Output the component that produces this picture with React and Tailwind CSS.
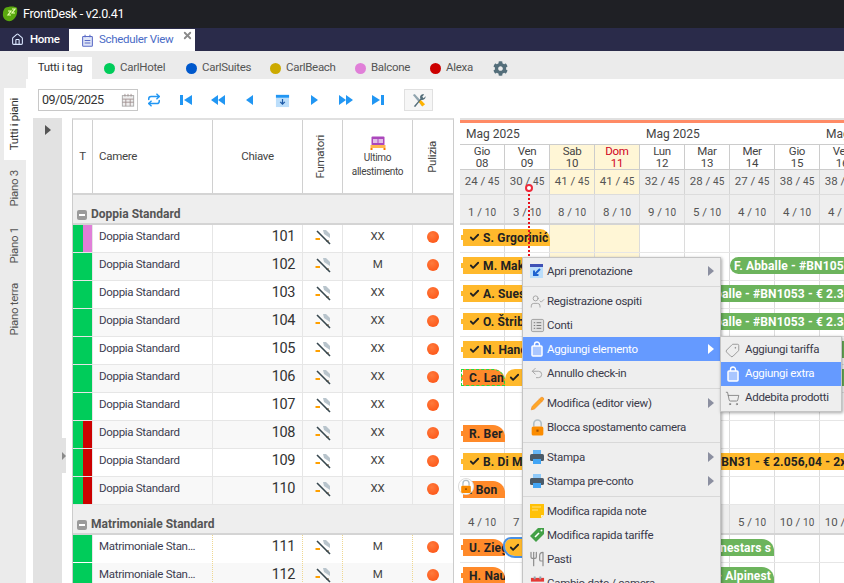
import React from "react";
import { Home, Repeat, Undo2, Pencil, Tag, ShoppingCart, Check, X, UserCheck, Utensils } from "lucide-react";
import { FaCog } from "react-icons/fa";

const tags = [
  { name: "CarlHotel", dot: "bg-[#00cc5a]", w: "w-[82px]" },
  { name: "CarlSuites", dot: "bg-[#0058cc]", w: "w-[84px]" },
  { name: "CarlBeach", dot: "bg-[#ccaa00]", w: "w-[85px]" },
  { name: "Balcone", dot: "bg-[#e07fd8]", w: "w-[75px]" },
  { name: "Alexa", dot: "bg-[#cc0000]", w: "w-[63px]" },
];

const days = [
  { d: "Gio", n: "08", a: "24", b: "1" },
  { d: "Ven", n: "09", a: "30", b: "3" },
  { d: "Sab", n: "10", a: "41", b: "8", we: true },
  { d: "Dom", n: "11", a: "41", b: "8", we: true, red: true },
  { d: "Lun", n: "12", a: "32", b: "9" },
  { d: "Mar", n: "13", a: "28", b: "5" },
  { d: "Mer", n: "14", a: "27", b: "4" },
  { d: "Gio", n: "15", a: "38", b: "4" },
  { d: "Ven", n: "16", a: "38", b: "4" },
];

const doppie = [
  { n: "101", s: "XX", side: "bg-[#e07fd8]" },
  { n: "102", s: "M" },
  { n: "103", s: "XX" },
  { n: "104", s: "XX" },
  { n: "105", s: "XX" },
  { n: "106", s: "XX" },
  { n: "107", s: "XX" },
  { n: "108", s: "XX", side: "bg-[#cc0000]" },
  { n: "109", s: "XX", side: "bg-[#cc0000]" },
  { n: "110", s: "XX", side: "bg-[#cc0000]" },
];

const matrimoniali = [
  { n: "111", s: "M" },
  { n: "112", s: "M" },
];

function Step({ kind }) {
  const shapes = {
    first: <><rect x="2" y="3" width="3" height="10" /><polygon points="14,3 14,13 6,8" /></>,
    fastPrev: <><polygon points="8,3 8,13 1,8" /><polygon points="15,3 15,13 8,8" /></>,
    prev: <polygon points="11,3 11,13 4,8" />,
    next: <polygon points="5,3 5,13 12,8" />,
    fastNext: <><polygon points="1,3 1,13 8,8" /><polygon points="8,3 8,13 15,8" /></>,
    last: <><polygon points="2,3 2,13 10,8" /><rect x="11" y="3" width="3" height="10" /></>,
  };
  return <svg viewBox="0 0 16 16" className="w-[16px] h-[16px] fill-[#2196f3]">{shapes[kind]}</svg>;
}

function NoSmoke() {
  return (
    <svg viewBox="0 0 16 16" className="w-[16px] h-[16px]">
      <rect x="0.5" y="9" width="4.5" height="2" fill="#ffa000" />
      <path d="M8 1 L11 1 L15 5 L15 9 L12 7 L9 5 Z" fill="#b8c4cc" />
      <rect x="11" y="11" width="3" height="2" fill="#b9a58f" />
      <path d="M2 2 L15 15" stroke="#37474f" strokeWidth="1.6" />
    </svg>
  );
}

function Bag() {
  return (
    <svg viewBox="0 0 16 16" className="w-[16px] h-[16px]">
      <path d="M5.5 5 V3.5 a2.5 2.5 0 0 1 5 0 V5" fill="none" stroke="#fff" strokeWidth="1.4" />
      <rect x="3" y="5" width="10" height="10" rx="1" fill="#a9c6ff" stroke="#fff" strokeWidth="1.5" />
    </svg>
  );
}

function Printer({ light }) {
  return (
    <svg viewBox="0 0 16 16" className="w-[16px] h-[16px]">
      <rect x="4" y="1" width="8" height="5" fill={light ? "#90caf9" : "#64b5f6"} />
      <rect x="1" y="5" width="14" height="7" rx="1.5" fill="#4a5a68" />
      <rect x="4" y="10" width="8" height="5" fill="#42a5f5" />
    </svg>
  );
}

const lockIcon = (
  <svg viewBox="0 0 16 16" className="w-[17px] h-[17px]">
    <path d="M4.5 7 V4.5 a3.5 3.5 0 0 1 7 0 V7" fill="none" stroke="#b0bec5" strokeWidth="1.5" />
    <rect x="2.5" y="7" width="11" height="8.5" rx="1.5" fill="#fb8c00" />
    <rect x="7" y="10" width="2" height="2" fill="#a04f00" />
  </svg>
);

const menuIcons = {
  open: (
    <svg viewBox="0 0 16 16" className="w-[16px] h-[16px]">
      <rect x="1" y="1" width="13" height="14" fill="#bbdefb" />
      <rect x="1" y="1" width="13" height="3" fill="#3f51b5" />
      <path d="M11 6 L5 12 M5 7.5 V12 H9.5" stroke="#1e63d0" strokeWidth="2" fill="none" />
    </svg>
  ),
  guests: <UserCheck size={15} strokeWidth={1.4} className="text-[#9e9e9e]" />,
  bills: (
    <svg viewBox="0 0 16 16" className="w-[15px] h-[15px]">
      <rect x="1.5" y="1.5" width="13" height="13" rx="1.5" fill="#e0e0e0" stroke="#9e9e9e" />
      <path d="M4 5 H5.5 M7 5 H12 M4 8 H5.5 M7 8 H12 M4 11 H5.5 M7 11 H12" stroke="#757575" />
    </svg>
  ),
  bag: <Bag />,
  undo: <Undo2 size={14} strokeWidth={1.5} className="text-[#9e9e9e]" />,
  edit: <Pencil size={15} strokeWidth={1.2} className="text-[#ef8f2f] fill-[#ffa726]" />,
  lock: lockIcon,
  print: <Printer />,
  printLight: <Printer light />,
  note: (
    <svg viewBox="0 0 16 16" className="w-[16px] h-[16px]">
      <path d="M1 1 H15 V12 L12 15 H1 Z" fill="#ffc107" />
      <path d="M3 4 H12 M3 7 H9" stroke="#ffe082" />
      <path d="M15 12 L12 15 V12 Z" fill="#fff3c4" />
    </svg>
  ),
  price: (
    <svg viewBox="0 0 16 16" className="w-[16px] h-[16px]">
      <path d="M1 9 L9 1 H15 V7 L7 15 Z" fill="#43a047" />
      <path d="M6 10 L10 6" stroke="#fff" strokeWidth="1.6" />
      <circle cx="12.5" cy="3.5" r="1" fill="#fff" />
    </svg>
  ),
  meals: <Utensils size={16} strokeWidth={1.8} className="text-[#8d8d8d]" />,
  change: (
    <svg viewBox="0 0 16 16" className="w-[15px] h-[15px]">
      <rect x="1" y="2" width="14" height="13" rx="1" fill="#eceff1" />
      <rect x="1" y="2" width="14" height="4" fill="#e53935" />
      <rect x="4" y="0.5" width="2" height="3" fill="#90a4ae" />
      <rect x="10" y="0.5" width="2" height="3" fill="#90a4ae" />
    </svg>
  ),
};

const menu = [
  { label: "Apri prenotazione", icon: "open", sub: true },
  "sep",
  { label: "Registrazione ospiti", icon: "guests" },
  { label: "Conti", icon: "bills" },
  { label: "Aggiungi elemento", icon: "bag", sub: true, active: true },
  { label: "Annullo check-in", icon: "undo" },
  "sep",
  { label: "Modifica (editor view)", icon: "edit", sub: true },
  { label: "Blocca spostamento camera", icon: "lock" },
  "sep",
  { label: "Stampa", icon: "print", sub: true },
  { label: "Stampa pre-conto", icon: "printLight", sub: true },
  "sep",
  { label: "Modifica rapida note", icon: "note" },
  { label: "Modifica rapida tariffe", icon: "price" },
  { label: "Pasti", icon: "meals" },
  { label: "Cambio date / camera", icon: "change" },
];

function GroupLabel({ name }) {
  return (
    <div className="h-[30px] bg-[#eeeeee] border-b-[2px] border-[#d4d4d4] flex items-end pb-[1px] pl-[4px] gap-[4px]">
      <span className="mb-[2px] w-[10px] h-[10px] rounded-[2px] bg-[#9a9a9a] flex items-center justify-center">
        <span className="w-[6px] h-[2px] bg-white" />
      </span>
      <span className="font-bold text-[12px] leading-[15px] tracking-normal text-[#555]">{name}</span>
    </div>
  );
}

function RoomRow({ room, type, alt, dotted }) {
  const cell = `border-r ${dotted ? "border-dotted border-[#f0d890]" : "border-[#e6e6e6]"}`;
  return (
    <div className={`h-[28px] flex border-b ${dotted ? "border-white" : "border-[#e6e6e6]"} ${alt ? "bg-[#f8f8f8]" : "bg-white"}`}>
      <div className="w-[20px] flex shrink-0 border-r border-[#e6e6e6]">
        <div className={`bg-[#00cc5a] ${room.side ? "w-[10px]" : "w-[19px]"}`} />
        {room.side && <div className={`w-[9px] ${room.side}`} />}
      </div>
      <div className={`w-[120px] pl-[6px] pr-[12px] pt-[3px] text-[#3c3c50] truncate ${cell}`}>{type}</div>
      <div className={`w-[90px] pr-[7px] pt-[2px] text-right text-[14.5px] leading-[20px] tracking-[-0.4px] text-[#333] ${cell}`}>{room.n}</div>
      <div className={`w-[40px] flex justify-center pt-[4px] ${cell}`}><NoSmoke /></div>
      <div className={`w-[70px] text-center pt-[3px] text-[#444] ${cell}`}>{room.s}</div>
      <div className="w-[40px] flex justify-center pt-[6px]">
        <span className="w-[12px] h-[12px] rounded-full bg-[radial-gradient(circle_at_40%_35%,#ff7a3c,#fc4f10)]" />
      </div>
    </div>
  );
}

function Stat({ a, total }) {
  return (
    <span className="text-[#555] text-[11.5px] tracking-normal">
      {a} / <span className="text-[10px]">{total}</span>
    </span>
  );
}

function TimelineRow() {
  return (
    <div className="h-[28px] flex border-b border-[#e6e6e6]">
      {days.map((d) => (
        <div key={d.n} className={`w-[45px] shrink-0 border-r border-[#dcdcdc] ${d.we ? "bg-[#fff6d6]" : ""}`} />
      ))}
    </div>
  );
}

function StatsRow({ values }) {
  return (
    <div className="h-[30px] flex bg-[#eeeeee] border-b-[2px] border-[#d4d4d4]">
      {values.map((v, i) => (
        <div key={i} className="w-[45px] shrink-0 border-r border-[#dcdcdc] flex items-end justify-center pb-[2px]">
          {v && <Stat a={v} total="10" />}
        </div>
      ))}
    </div>
  );
}

function Booking({ kind, x, y, w, label, check, round, dashed, end, plain, selected }) {
  const colors = {
    yellow: "bg-[#ffb92c] text-[#222]",
    orange: "bg-[#ff8a2a] text-[#222]",
    green: "bg-[#6cb45c] text-white",
  };
  return (
    <div
      className={`absolute h-[17px] flex items-center gap-[3px] text-[12px] tracking-[0.15px] font-bold whitespace-nowrap overflow-hidden ${colors[kind]} ${round || ""} ${kind !== "green" && !plain ? "border-l-[2px] border-dashed border-l-white pl-[6px]" : "pl-[4px]"} ${end ? "justify-end pr-[3px]" : ""} ${dashed ? "outline-1 outline-dashed outline-[#22dd44] -outline-offset-1" : ""} ${selected ? "outline-2 outline-[#4a90e2]" : ""}`}
      style={{ left: x, top: y, width: w }}
    >
      {check && <Check size={11} strokeWidth={4} className="text-[#222] shrink-0" />}
      {label}
    </div>
  );
}

const rowY = (i) => 4 + 28 * i;
const row2Y = (i) => 28 * 10 + 30 + 4 + 28 * i;

export default function App() {
  return (
    <div className="relative w-[844px] h-[583px] overflow-hidden bg-white flex flex-col font-['Roboto',sans-serif] text-[11.5px] tracking-[-0.3px] text-[#333]">
      {/* title bar */}
      <div className="h-[28px] bg-[#1f2025] flex items-center pl-[2px] gap-[5px] shrink-0">
        <svg viewBox="0 0 16 16" className="w-[16px] h-[16px]">
          <path d="M3 2 C7 0 13 0 15 2 C16 7 14 13 9 15 C4 16 0 12 1 7 C1 5 2 3 3 2 Z" fill="#5aa80f" />
          <path d="M6 5 H9 L6 9 H9 M10 3 H13 L10 7 H13" stroke="#eaffb0" strokeWidth="1.2" fill="none" />
        </svg>
        <span className="text-white text-[12.5px]">FrontDesk - v2.0.41</span>
      </div>

      {/* nav */}
      <div className="h-[23px] bg-[#2a2b4a] flex shrink-0">
        <div className="w-[69px] flex items-center pl-[11px] gap-[6px] text-white font-medium">
          <Home size={13} strokeWidth={2} className="text-[#dbe7ff]" />
          Home
        </div>
        <div className="relative mt-[1px] w-[126px] bg-white flex items-center pl-[12px] gap-[5px] text-[#4a6bc6]">
          <svg viewBox="0 0 16 16" className="w-[13px] h-[13px]">
            <rect x="2" y="3" width="12" height="12" rx="1" fill="#dfe5f7" stroke="#5b6bc6" strokeWidth="1.3" />
            <path d="M5 1 V4 M11 1 V4 M4.5 8 H11.5 M4.5 11 H11.5" stroke="#5b6bc6" strokeWidth="1.3" />
          </svg>
          Scheduler View
          <X size={11} strokeWidth={4} className="absolute right-[2px] top-[1px] text-[#8a8a8a]" />
        </div>
      </div>

      {/* tag tabs */}
      <div className="h-[28px] bg-[#ebebeb] flex items-end pl-[28px] shrink-0">
        <div className="w-[64px] h-[22px] bg-white flex items-center justify-center">Tutti i tag</div>
        <div className="h-[22px] flex items-center pl-[12px] text-[#555]">
          {tags.map((t) => (
            <div key={t.name} className={`flex items-center gap-[5px] ${t.w}`}>
              <span className={`w-[11px] h-[11px] rounded-full ${t.dot}`} />
              {t.name}
            </div>
          ))}
          <FaCog size={15} className="text-[#546e7a]" />
        </div>
      </div>

      <div className="flex-1 min-h-0 flex">
        {/* floor tabs */}
        <div className="w-[26px] bg-[#ebebeb] shrink-0 pl-[4px] pt-[9px] flex flex-col items-stretch text-[#555]">
          <div className="h-[72px] bg-white flex items-center justify-center text-[#333]">
            <span className="[writing-mode:vertical-rl] rotate-180">Tutti i piani</span>
          </div>
          <div className="h-[56px] flex items-center justify-center">
            <span className="[writing-mode:vertical-rl] rotate-180">Piano 3</span>
          </div>
          <div className="h-[58px] flex items-center justify-center">
            <span className="[writing-mode:vertical-rl] rotate-180">Piano 1</span>
          </div>
          <div className="h-[70px] flex items-center justify-center">
            <span className="[writing-mode:vertical-rl] rotate-180">Piano terra</span>
          </div>
        </div>

        <div className="flex-1 min-w-0 flex flex-col">
          {/* toolbar */}
          <div className="h-[39px] pl-[12px] pt-[10px] flex items-start shrink-0">
            <div className="w-[100px] h-[22px] border border-[#c8c8c8] flex items-center justify-between pl-[3px] pr-[2px] text-[12.5px] tracking-[-0.5px] text-[#333]">
              09/05/2025
              <svg viewBox="0 0 16 16" className="w-[14px] h-[14px]">
                <rect x="1.5" y="3" width="13" height="12" fill="#eee" stroke="#a5a5a5" />
                <path d="M4.5 1 V4 M8 1 V4 M11.5 1 V4 M1.5 7 H14.5 M1.5 10.5 H14.5 M5.5 7 V15 M10.5 7 V15" stroke="#a08f8f" />
              </svg>
            </div>
            <div className="h-[22px] flex">
              <div className="w-[32px] flex items-center justify-center"><Repeat size={14} strokeWidth={2.6} className="text-[#2196f3]" /></div>
              <div className="w-[32px] flex items-center justify-center"><Step kind="first" /></div>
              <div className="w-[32px] flex items-center justify-center"><Step kind="fastPrev" /></div>
              <div className="w-[32px] flex items-center justify-center"><Step kind="prev" /></div>
              <div className="w-[32px] flex items-center justify-center">
                <svg viewBox="0 0 16 16" className="w-[15px] h-[15px]">
                  <rect x="1" y="2" width="14" height="13" fill="#bbdefb" />
                  <rect x="1" y="2" width="14" height="3" fill="#2196f3" />
                  <path d="M8 6.5 V12 M5.5 9.5 L8 12 L10.5 9.5" stroke="#1e5aa8" strokeWidth="1.3" fill="none" />
                </svg>
              </div>
              <div className="w-[32px] flex items-center justify-center"><Step kind="next" /></div>
              <div className="w-[32px] flex items-center justify-center"><Step kind="fastNext" /></div>
              <div className="w-[32px] flex items-center justify-center"><Step kind="last" /></div>
            </div>
            <div className="ml-[10px] w-[29px] h-[22px] bg-[#f6f6f6] border border-[#e0e0e0] flex items-center justify-center">
              <svg viewBox="0 0 16 16" className="w-[15px] h-[15px]">
                <path d="M2 2 L4 1 L14 12 L12 14 Z" fill="#90a4ae" />
                <path d="M8 9 L12 14.5 L15 12 L10 7 Z" fill="#ffb300" />
                <path d="M3 14 L10 6 C9 3 11 1 14 1.5 L12 4 L13.5 5.5 L15.5 3.5 C16 6 13 8 10.5 7.5 L4.5 15 Z" fill="#546e7a" />
              </svg>
            </div>
          </div>

          <div className="flex-1 min-h-0 flex">
            {/* collapsed side panel */}
            <div className="relative ml-[7px] w-[29px] bg-[#e2e2e2] shrink-0 flex justify-center pt-[7px]">
              <span className="w-0 h-0 border-y-[5px] border-y-transparent border-l-[6px] border-l-[#555]" />
              <div className="absolute -right-[4px] top-[320px] w-[4px] h-[35px] bg-[#e2e2e2] flex items-center">
                <span className="w-0 h-0 border-y-[4px] border-y-transparent border-l-[4px] border-l-[#8a8a8a]" />
              </div>
            </div>

            {/* rooms table */}
            <div className="ml-[10px] w-[382px] border-x border-[#cccccc] shrink-0 border-t-[2px] border-t-[#e0e0e0] overflow-hidden">
              <div className="h-[75px] flex border-b-[2px] border-[#d4d4d4] text-[#444]">
                <div className="w-[20px] border-r border-[#d0d0d0] flex items-center justify-center">T</div>
                <div className="w-[120px] border-r border-[#d0d0d0] pl-[6px] flex items-center">Camere</div>
                <div className="w-[90px] border-r border-[#d0d0d0] flex items-center justify-center">Chiave</div>
                <div className="w-[40px] border-r border-[#d0d0d0] flex items-center justify-center pr-[3px]">
                  <span className="[writing-mode:vertical-rl] rotate-180">Fumatori</span>
                </div>
                <div className="w-[70px] border-r border-[#d0d0d0] flex flex-col items-center pt-[16px] text-[10px] leading-[14px] text-center">
                  <svg viewBox="0 0 16 14" className="w-[16px] h-[14px] mb-[1px]">
                    <rect x="1.5" y="0.5" width="13" height="9" rx="1" fill="#ab47bc" />
                    <rect x="3" y="3" width="4.5" height="4" fill="#e1bee7" />
                    <rect x="8.5" y="3" width="4.5" height="4" fill="#e1bee7" />
                    <rect x="0.5" y="9" width="15" height="3" fill="#ffb74d" />
                    <rect x="0.5" y="12" width="2" height="2" fill="#f57c00" />
                    <rect x="13.5" y="12" width="2" height="2" fill="#f57c00" />
                  </svg>
                  Ultimo<br />allestimento
                </div>
                <div className="w-[40px] flex items-center justify-center">
                  <span className="[writing-mode:vertical-rl] rotate-180">Pulizia</span>
                </div>
              </div>
              <GroupLabel name="Doppia Standard" />
              {doppie.map((r, i) => (
                <RoomRow key={r.n} room={r} type="Doppia Standard" alt={i % 2 === 1} />
              ))}
              <GroupLabel name="Matrimoniale Standard" />
              {matrimoniali.map((r, i) => (
                <RoomRow key={r.n} room={r} type="Matrimoniale Standard" alt={i % 2 === 1} dotted />
              ))}
            </div>

            {/* timeline */}
            <div className="ml-[6px] flex-1 min-w-0 overflow-hidden border-t-[2px] border-t-[#e0e0e0]">
              <div className="h-[3px] bg-[#ff8a65]" />
              <div className="w-[405px]">
                <div className="h-[22px] relative border-b border-[#cccccc] text-[#444] text-[12px] tracking-normal leading-[16px] whitespace-nowrap">
                  <span className="absolute left-[6px] top-[3px]">Mag 2025</span>
                  <span className="absolute left-[186px] top-[3px]">Mag 2025</span>
                  <span className="absolute left-[366px] top-[3px]">Mag 2025</span>
                </div>
                <div className="h-[25px] flex border-b border-[#cccccc]">
                  {days.map((d) => (
                    <div key={d.n} className={`w-[45px] shrink-0 border-r border-[#cccccc] flex flex-col items-center leading-[12px] ${d.we ? "bg-[#fff6d6]" : ""} ${d.red ? "text-[#d0021b]" : "text-[#444]"}`}>
                      <span>{d.d}</span>
                      <span>{d.n}</span>
                    </div>
                  ))}
                </div>
                <div className="h-[25px] flex border-b border-[#dcdcdc]">
                  {days.map((d) => (
                    <div key={d.n} className={`w-[45px] shrink-0 border-r border-[#d4d4d4] flex items-center justify-center ${d.we ? "bg-[#fff6d6]" : "bg-[#eeeeee]"}`}>
                      <Stat a={d.a} total="45" />
                    </div>
                  ))}
                </div>
                <StatsRow values={days.map((d) => d.b)} />
                <div className="relative">
                  {doppie.map((r) => <TimelineRow key={r.n} />)}
                  <StatsRow values={["4", "7", "", "", "", "", "5", "10", "10"]} />
                  {matrimoniali.map((r) => <TimelineRow key={r.n} />)}

                  <Booking kind="yellow" x={1} y={rowY(0)} w={89} label="S. Grgorinić" check round="rounded-tr-[10px]" />
                  <Booking kind="yellow" x={1} y={rowY(1)} w={100} label="M. Makarov" check />
                  <Booking kind="green" x={270} y={rowY(1)} w={140} label="F. Abballe - #BN1053" round="rounded-tl-[10px] rounded-bl-[10px]" />
                  <Booking kind="yellow" x={1} y={rowY(2)} w={100} label="A. Suessmann" check />
                  <Booking kind="green" x={224} y={rowY(2)} w={190} label="F. Abballe - #BN1053 - € 2.3" />
                  <Booking kind="yellow" x={1} y={rowY(3)} w={100} label="O. Štribar" check />
                  <Booking kind="green" x={224} y={rowY(3)} w={190} label="F. Abballe - #BN1053 - € 2.3" />
                  <Booking kind="yellow" x={1} y={rowY(4)} w={100} label="N. Handel" check />
                  <Booking kind="green" x={382} y={rowY(4)} w={30} label="" />
                  <Booking kind="orange" x={1} y={rowY(5)} w={44} label="C. Lan" round="rounded-tr-[12px]" dashed />
                  <Booking kind="yellow" x={45} y={rowY(5)} w={40} label="" check round="rounded-tl-[10px]" plain />
                  <Booking kind="green" x={382} y={rowY(5)} w={30} label="" />
                  <Booking kind="orange" x={1} y={rowY(7)} w={44} label="R. Ber" round="rounded-tr-[12px]" />
                  <Booking kind="yellow" x={1} y={rowY(8)} w={100} label="B. Di Marco" check />
                  <Booking kind="yellow" x={250} y={rowY(8)} w={160} label="#BN31 - € 2.056,04 - 2xN" plain />
                  <Booking kind="orange" x={1} y={rowY(9)} w={44} label=". Bon" round="rounded-tr-[12px]" />
                  <Booking kind="orange" x={1} y={row2Y(0)} w={44} label="U. Zieg" round="rounded-tr-[12px]" />
                  <Booking kind="yellow" x={45} y={row2Y(0)} w={40} label="" check round="rounded-tl-[6px] rounded-bl-[10px]" plain selected />
                  <Booking kind="green" x={180} y={row2Y(0)} w={134} label="Alpinestars s" round="rounded-tr-[12px]" end />
                  <Booking kind="orange" x={1} y={row2Y(1)} w={44} label="H. Nau" round="rounded-tr-[12px]" />
                  <Booking kind="green" x={180} y={row2Y(1)} w={134} label="- Alpinest" round="rounded-tr-[12px]" end />
                </div>
              </div>
            </div>
          </div>
        </div>
      </div>

      {/* now marker */}
      <div className="absolute left-[528px] top-[190px] h-[70px] border-l-2 border-dotted border-[#e8101c]" />
      <div className="absolute left-[525px] top-[184px] w-[8px] h-[8px] rounded-full bg-white border-2 border-[#ee2a3a]" />

      {/* lock badge on booking */}
      <div className="absolute left-[458px] top-[478px] w-[16px] h-[17px] rounded-full bg-white border border-[#ddd] flex items-center justify-center">
        {lockIcon}
      </div>

      {/* context menu */}
      <div className="absolute left-[522px] top-[257px] w-[199px] bg-[#eeeeee] border border-[#c4c4c4] shadow-[1px_1px_3px_rgba(0,0,0,0.35)] pt-[1px]">
        {menu.map((m, i) =>
          m === "sep" ? (
            <div key={i} className="h-[6px] flex items-center"><div className="w-full h-px bg-[#d8d8d8]" /></div>
          ) : (
            <div key={m.label} className={`h-[24px] flex items-center pl-[4px] ${m.active ? "bg-[#659aff] text-white" : "text-[#3a3a4a]"}`}>
              <span className="w-[20px] flex justify-center">{menuIcons[m.icon]}</span>
              <span className="flex-1 whitespace-nowrap pt-[1px]">{m.label}</span>
              {m.sub && (
                <span className={`mr-[6px] w-0 h-0 border-y-[5px] border-y-transparent border-l-[6px] ${m.active ? "border-l-white" : "border-l-[#8b8fa0]"}`} />
              )}
            </div>
          )
        )}
      </div>

      {/* sub menu */}
      <div className="absolute left-[720px] top-[336px] w-[122px] bg-[#eeeeee] border border-[#c4c4c4] shadow-[1px_1px_3px_rgba(0,0,0,0.35)] py-px text-[#3a3a4a] whitespace-nowrap">
        <div className="h-[24px] flex items-center pl-[4px] gap-[5px]"><Tag size={15} strokeWidth={1.3} className="text-[#8a8a8a] rotate-90" />Aggiungi tariffa</div>
        <div className="h-[24px] flex items-center pl-[4px] gap-[4px] bg-[#659aff] text-white"><Bag />Aggiungi extra</div>
        <div className="h-[24px] flex items-center pl-[4px] gap-[5px]"><ShoppingCart size={15} strokeWidth={1.3} className="text-[#777]" />Addebita prodotti</div>
      </div>
    </div>
  );
}
